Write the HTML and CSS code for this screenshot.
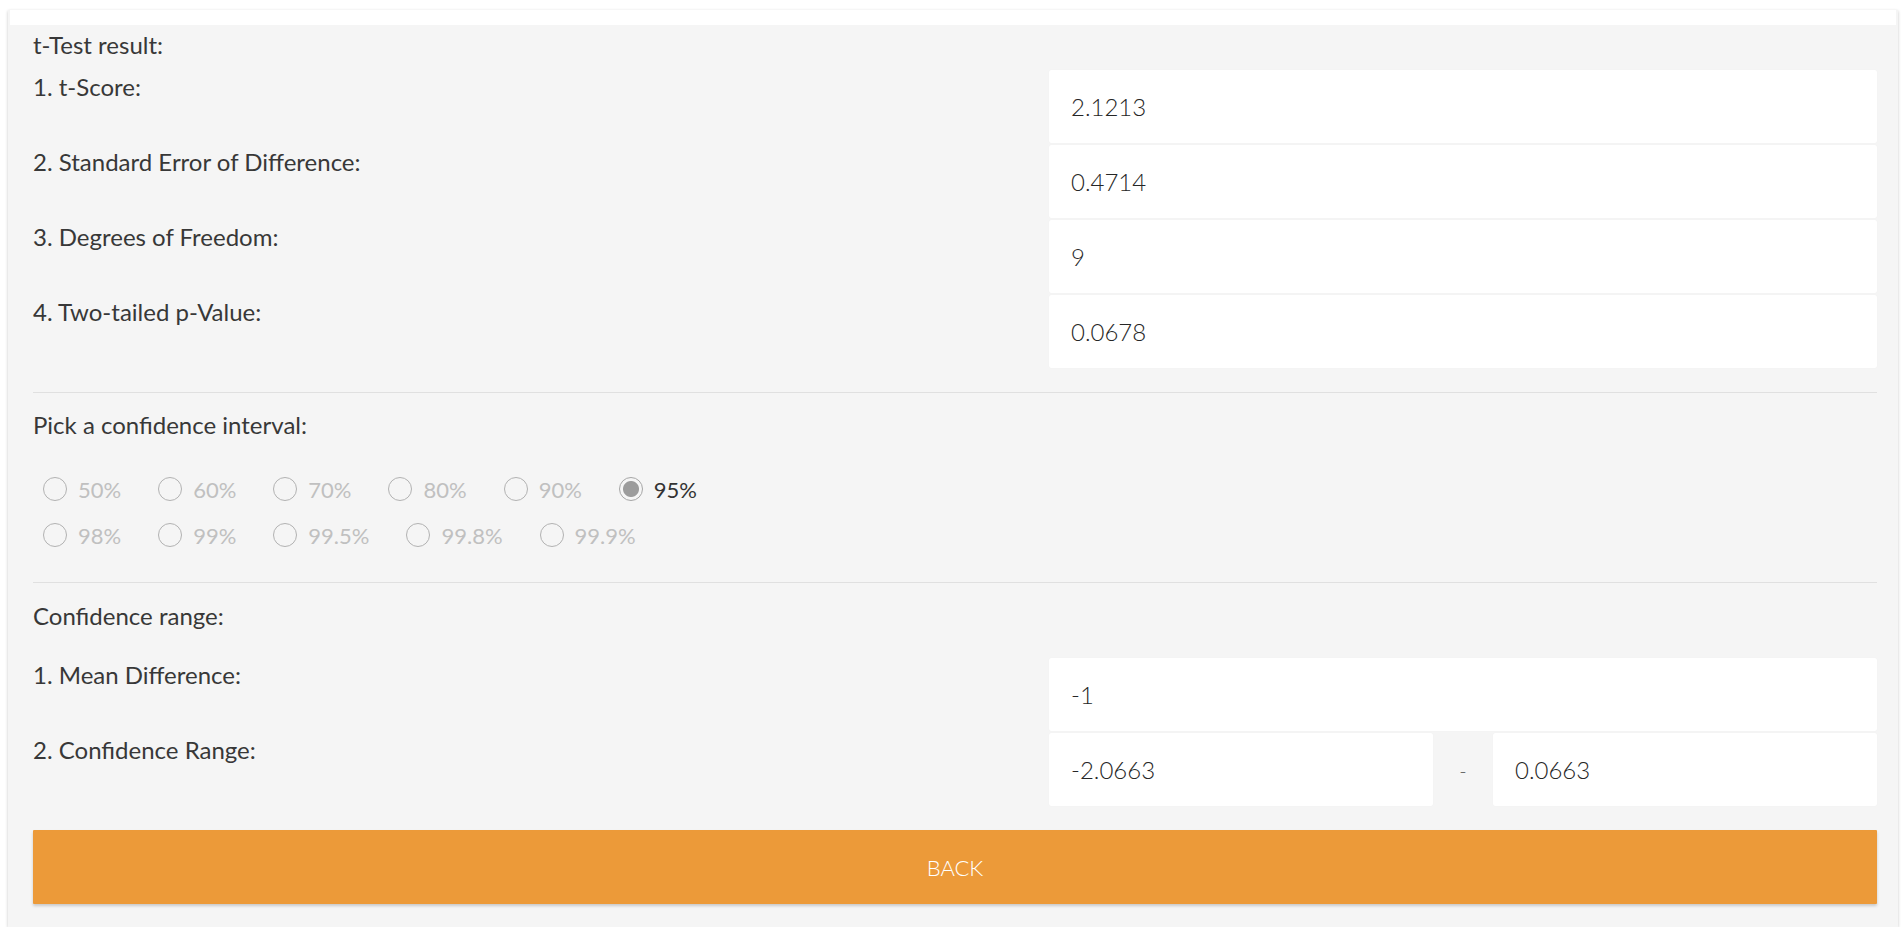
FILE: index.html
```html
<!DOCTYPE html>
<html lang="en">
<head>
<meta charset="utf-8">
<title>t-Test result</title>
<link rel="stylesheet" href="styles.css">
</head>
<body>
<div class="card">
  <div class="card-head"></div>
  <div class="card-body">
    <section class="section">
      <div class="title first">t-Test result:</div>
      <div class="rows">
        <div class="row"><div class="label">1. t-Score:</div><div class="field"><input class="value" type="text" value="2.1213" readonly></div></div>
        <div class="row"><div class="label">2. Standard Error of Difference:</div><div class="field"><input class="value" type="text" value="0.4714" readonly></div></div>
        <div class="row"><div class="label">3. Degrees of Freedom:</div><div class="field"><input class="value" type="text" value="9" readonly></div></div>
        <div class="row"><div class="label">4. Two-tailed p-Value:</div><div class="field"><input class="value" type="text" value="0.0678" readonly></div></div>
      </div>
    </section>
    <hr class="divider">
    <section class="section">
      <div class="title pick">Pick a confidence interval:</div>
      <div class="radios">
        <div class="radio-line">
          <label class="radio"><input type="radio" name="ci" disabled><span>50%</span></label>
          <label class="radio"><input type="radio" name="ci" disabled><span>60%</span></label>
          <label class="radio"><input type="radio" name="ci" disabled><span>70%</span></label>
          <label class="radio"><input type="radio" name="ci" disabled><span>80%</span></label>
          <label class="radio"><input type="radio" name="ci" disabled><span>90%</span></label>
          <label class="radio on"><input type="radio" name="ci" checked disabled><span>95%</span></label>
        </div>
        <div class="radio-line">
          <label class="radio"><input type="radio" name="ci" disabled><span>98%</span></label>
          <label class="radio"><input type="radio" name="ci" disabled><span>99%</span></label>
          <label class="radio"><input type="radio" name="ci" disabled><span>99.5%</span></label>
          <label class="radio"><input type="radio" name="ci" disabled><span>99.8%</span></label>
          <label class="radio"><input type="radio" name="ci" disabled><span>99.9%</span></label>
        </div>
      </div>
    </section>
    <hr class="divider second">
    <section class="section">
      <div class="title range-title">Confidence range:</div>
      <div class="rows range-rows">
        <div class="row"><div class="label">1. Mean Difference:</div><div class="field"><input class="value" type="text" value="-1" readonly></div></div>
        <div class="row"><div class="label">2. Confidence Range:</div>
          <div class="field range">
            <input class="value half" type="text" value="-2.0663" readonly>
            <span class="dash">-</span>
            <input class="value half" type="text" value="0.0663" readonly>
          </div>
        </div>
      </div>
    </section>
    <button class="back" type="button">BACK</button>
  </div>
</div>
</body>
</html>
```

FILE: styles.css
```css
* { box-sizing: border-box; }

html, body {
  margin: 0;
  padding: 0;
  background: #ffffff;
}

body {
  font-family: Lato, "Open Sans", "Liberation Sans", sans-serif;
  color: #383838;
}

.card {
  margin: 10px 6px 0 8px;
  width: 1890px;
  background: #f5f5f5;
  box-shadow: 0 1px 3px rgba(0, 0, 0, 0.22);
}

.card-head {
  height: 15px;
  margin: 0 2px;
  background: #ffffff;
}

.card-body {
  padding: 0 21px 23px 25px;
}

.title {
  font-size: 24px;
  line-height: 28px;
}

.title.first {
  padding-top: 6px;
}

.title.pick {
  margin-top: 18px;
}

.title.range-title {
  margin-top: 19px;
}

.rows {
  display: flex;
  flex-direction: column;
  gap: 2px;
  margin-top: 11px;
}

.range-rows {
  margin-top: 28px;
}

.row {
  display: flex;
  align-items: flex-start;
}

.label {
  flex: 1;
  font-size: 24px;
  line-height: 28px;
  padding-top: 3px;
}

.field {
  width: 828px;
  display: flex;
  align-items: center;
}

.value {
  display: block;
  width: 100%;
  height: 73px;
  margin: 0;
  border: none;
  border-radius: 2px;
  background: #ffffff;
  box-shadow: 0 0 1px rgba(0, 0, 0, 0.06);
  padding: 0 0 0 22px;
  font-family: Lato, "Open Sans", "Liberation Sans", sans-serif;
  font-weight: 300;
  font-size: 24px;
  color: #262626;
  outline: none;
}

.value.half {
  width: 384px;
  flex: none;
}

.dash {
  flex: 1;
  text-align: center;
  font-size: 20px;
  font-weight: 300;
  color: #555555;
}

.divider {
  margin: 24px 0 0 0;
  border: none;
  border-top: 1px solid #e0e0e0;
  height: 0;
}

.divider.second {
  margin-top: 24px;
}

.radios {
  margin-top: 27px;
  padding-left: 10px;
}

.radio-line {
  display: flex;
  align-items: center;
  height: 46px;
}

.radio {
  display: flex;
  align-items: center;
  margin-right: 37px;
  font-size: 22px;
  color: #c0c0c0;
}

.radio.on {
  color: #333333;
}

.radio input {
  appearance: none;
  -webkit-appearance: none;
  width: 24px;
  height: 24px;
  margin: 0 11px 0 0;
  border: 1.5px solid #b2b2b2;
  border-radius: 50%;
  background: #f5f5f5;
}

.radio input:checked {
  border-color: #a6a6a6;
  background: radial-gradient(circle, #9c9c9c 0 7.5px, #f5f5f5 8.5px);
}

.back {
  display: block;
  width: 100%;
  height: 74px;
  margin: 24px 0 0 0;
  border: none;
  border-radius: 1px;
  background: #ec9a39;
  box-shadow: 0 2px 3px rgba(0, 0, 0, 0.18);
  color: #ffffff;
  font-family: Lato, "Open Sans", "Liberation Sans", sans-serif;
  font-weight: 300;
  font-size: 22px;
  cursor: pointer;
}
```
